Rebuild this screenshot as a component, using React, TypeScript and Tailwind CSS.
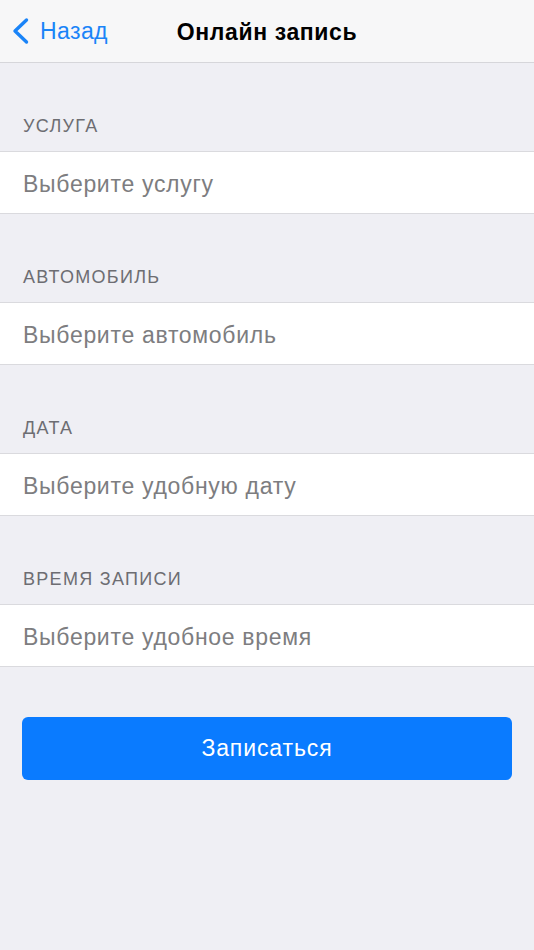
import React from "react";

const sections = [
  { label: "УСЛУГА", placeholder: "Выберите услугу" },
  { label: "АВТОМОБИЛЬ", placeholder: "Выберите автомобиль" },
  { label: "ДАТА", placeholder: "Выберите удобную дату" },
  { label: "ВРЕМЯ ЗАПИСИ", placeholder: "Выберите удобное время" },
];

export default function App() {
  return (
    <div
      className="min-h-[950px] w-[534px] bg-[#efeff4]"
      style={{ fontFamily: '"Liberation Sans", Arial, sans-serif' }}
    >
      <div className="relative flex h-[63px] items-center border-b border-[#d6d6da] bg-[#f7f7f8]">
        <div className="absolute left-[11px] top-0 flex h-full items-center gap-[10px]">
          <svg width="19" height="28" viewBox="0 0 19 28" fill="none">
            <path
              d="M15.5 3 L4 14 L15.5 25"
              stroke="#1a84f8"
              strokeWidth="3.4"
              strokeLinecap="round"
              strokeLinejoin="round"
            />
          </svg>
          <span className="text-[23px] leading-none tracking-[0.4px] text-[#1a84f8]">Назад</span>
        </div>
        <div className="flex-1 pt-[2px] text-center text-[23px] font-bold leading-none tracking-[0.6px] text-black">
          Онлайн запись
        </div>
      </div>

      {sections.map((s) => (
        <div key={s.label}>
          <div className="flex h-[88px] items-end pb-[13px] pl-[23px] text-[18px] leading-[24px] tracking-[1.3px] text-[#6d6d72]">
            {s.label}
          </div>
          <div className="flex h-[63px] items-center border-y border-[#dadade] bg-white pl-[23px] pt-[3px] text-[23px] tracking-[0.7px] text-[#7d7d80]">
            {s.placeholder}
          </div>
        </div>
      ))}

      <div className="px-[22px] pt-[50px]">
        <button className="flex h-[63px] w-full items-center justify-center rounded-[6px] bg-[#0a7bff] text-[23px] tracking-[0.9px] text-white">
          Записаться
        </button>
      </div>
    </div>
  );
}
